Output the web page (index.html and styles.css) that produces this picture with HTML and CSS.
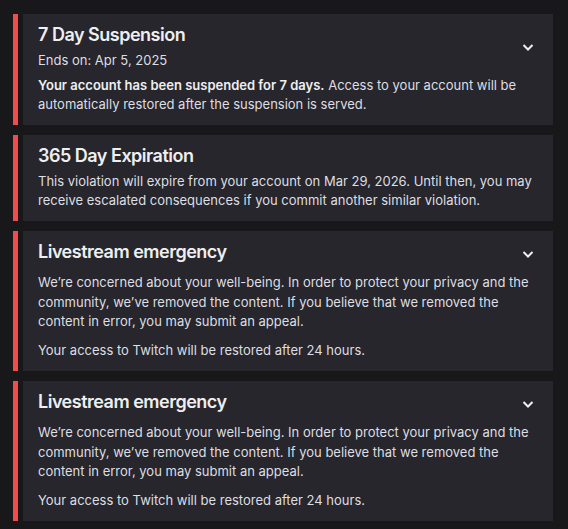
FILE: index.html
```html
<!DOCTYPE html>
<html>
<head>
<meta charset="utf-8">
<link rel="stylesheet" href="styles.css">
</head>
<body>
<div class="list">
  <div class="item">
    <div class="bar"></div>
    <div class="card">
      <div class="head">
        <div class="head-text">
          <div class="title">7 Day Suspension</div>
          <div class="sub">Ends on: Apr 5, 2025</div>
        </div>
        <div class="chev"><svg width="20" height="20" viewBox="0 0 20 20"><polyline points="5.5,8 10,12.5 14.5,8" fill="none" stroke="#efeff1" stroke-width="2"/></svg></div>
      </div>
      <p class="text gap5"><strong>Your account has been suspended for 7 days.</strong> Access to your account will be automatically restored after the suspension is served.</p>
    </div>
  </div>
  <div class="item">
    <div class="bar"></div>
    <div class="card">
      <div class="head">
        <div class="head-text">
          <div class="title">365 Day Expiration</div>
        </div>
      </div>
      <p class="text gap5">This violation will expire from your account on Mar 29, 2026. Until then, you may receive escalated consequences if you commit another similar violation.</p>
    </div>
  </div>
  <div class="item">
    <div class="bar"></div>
    <div class="card">
      <div class="head">
        <div class="head-text">
          <div class="title">Livestream emergency</div>
        </div>
        <div class="chev low"><svg width="20" height="20" viewBox="0 0 20 20"><polyline points="5.5,8 10,12.5 14.5,8" fill="none" stroke="#efeff1" stroke-width="2"/></svg></div>
      </div>
      <p class="text gap10">We’re concerned about your well-being. In order to protect your privacy and the community, we’ve removed the content. If you believe that we removed the content in error, you may submit an appeal.</p>
      <p class="text gap10">Your access to Twitch will be restored after 24 hours.</p>
    </div>
  </div>
  <div class="item">
    <div class="bar"></div>
    <div class="card">
      <div class="head">
        <div class="head-text">
          <div class="title">Livestream emergency</div>
        </div>
        <div class="chev low"><svg width="20" height="20" viewBox="0 0 20 20"><polyline points="5.5,8 10,12.5 14.5,8" fill="none" stroke="#efeff1" stroke-width="2"/></svg></div>
      </div>
      <p class="text gap10">We’re concerned about your well-being. In order to protect your privacy and the community, we’ve removed the content. If you believe that we removed the content in error, you may submit an appeal.</p>
      <p class="text gap10">Your access to Twitch will be restored after 24 hours.</p>
    </div>
  </div>
</div>
</body>
</html>
```
FILE: styles.css
```css
html, body {
  margin: 0;
  padding: 0;
  background: #18181b;
}
body {
  font-family: Inter, "Noto Sans", sans-serif;
  color: #efeff1;
}
.list {
  display: flex;
  flex-direction: column;
  gap: 10px;
  padding: 14px 15px 0 13px;
}
.item {
  display: flex;
  gap: 5px;
}
.bar {
  width: 5px;
  flex: none;
  background: #f54b4b;
}
.card {
  flex: 1;
  background: #26262c;
  padding: 10px 15px 10px 15px;
}
.head {
  display: flex;
  align-items: center;
}
.head-text {
  flex: 1;
}
.title {
  font-size: 18px;
  font-weight: 600;
  line-height: 22px;
  letter-spacing: -0.5px;
}
.sub {
  font-size: 13px;
  line-height: 19.5px;
  margin-top: 5px;
  color: #dedee3;
}
.chev {
  width: 20px;
  height: 20px;
  flex: none;
}
.chev svg {
  display: block;
}
.chev.low {
  margin-top: 3px;
}
.text {
  margin: 0;
  font-size: 13px;
  line-height: 19.5px;
  color: #dedee3;
}
.text strong {
  font-weight: 600;
  color: #efeff1;
}
.gap5 {
  margin-top: 5px;
}
.gap10 {
  margin-top: 9.5px;
}
```
